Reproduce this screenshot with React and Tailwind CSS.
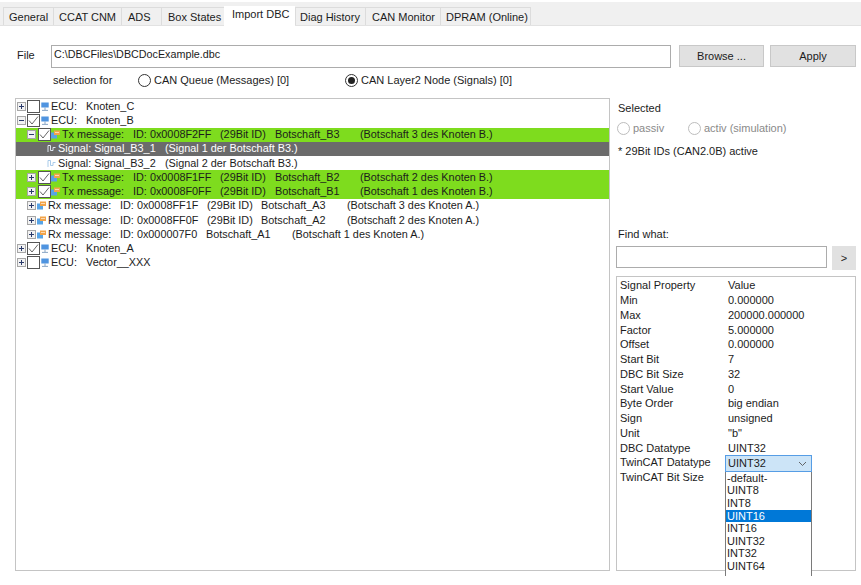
import React from "react";

const tabs = [
  ["General", "w-[51px] pl-[5px]"],
  ["CCAT CNM", "w-[69px] pl-[5px]"],
  ["ADS", "w-[41px] pl-[6px]"],
  ["Box States", "w-[64px] pl-[6px]"],
];
const tabs2 = [
  ["Diag History", "w-[71px] pl-[4px]"],
  ["CAN Monitor", "w-[76px] pl-[6px]"],
  ["DPRAM (Online)", "w-[91px] pl-[5px]"],
];

function Expander({ open }) {
  return (
    <span className="w-[9px] h-[9px] border border-[#a6a6a6] bg-[#f2f2f2] flex items-center justify-center shrink-0 relative">
      <span className="w-[5px] h-px bg-[#2a3a6a] block" />
      {!open && <span className="absolute w-px h-[5px] bg-[#2a3a6a] block" />}
    </span>
  );
}

function Check({ on }) {
  return (
    <span className="w-[13px] h-[13px] border border-[#555] bg-white shrink-0 flex items-center justify-center">
      {on && (
        <svg width="11" height="11" viewBox="0 0 11 11">
          <path d="M1 5.5 L4 9 L10 1.5" fill="none" stroke="#555" strokeWidth="0.9" />
        </svg>
      )}
    </span>
  );
}

function EcuIcon() {
  return (
    <svg width="8" height="9" viewBox="0 0 8 9" className="shrink-0">
      <rect x="0.3" y="0.5" width="7.4" height="5" fill="#4f94e0" />
      <path d="M4 5.5 V8 M1 8.4 H7" stroke="#7d9cc0" strokeWidth="0.9" />
    </svg>
  );
}

function MsgIcon() {
  return (
    <svg width="9" height="9" viewBox="0 0 9 9" className="shrink-0">
      <rect x="0" y="2.5" width="6" height="6" fill="#58a4e6" />
      <path d="M3 0.5 H9 V5 H3 Z" fill="#f2a44a" />
      <path d="M4 2.5 H8" stroke="#fff" strokeWidth="0.6" />
    </svg>
  );
}

function SigIcon({ light }) {
  const c = light ? "#dfe6f0" : "#a9cbea";
  return (
    <svg width="9" height="9" viewBox="0 0 9 9" className="shrink-0">
      <path d="M1 8 V1.5 H3.5 V6.5 H6 V3.5 H8.5" fill="none" stroke={c} strokeWidth="1" />
    </svg>
  );
}

function Row({ className = "", children }) {
  return <div className={`h-[14.25px] flex items-center whitespace-pre text-[10.85px] ${className}`}>{children}</div>;
}

function Ecu({ name, open, on }) {
  return (
    <Row className="pl-px">
      <Expander open={open} />
      <span className="w-px" />
      <Check on={on} />
      <span className="ml-px" />
      <EcuIcon />
      <span className="ml-[2px] w-[35px]">ECU:</span>
      <span>{name}</span>
    </Row>
  );
}

function Tx({ open, id, name, desc }) {
  return (
    <Row className="pl-[11px] bg-[#7edc1e]">
      <Expander open={open} />
      <span className="w-[2px]" />
      <Check on />
      <MsgIcon />
      <span className="ml-[2px] w-[71px]">Tx message:</span>
      <span className="w-[87px]">ID: {id}</span>
      <span className="w-[55px]">(29Bit ID)</span>
      <span className="w-[85px]">{name}</span>
      <span>{desc}</span>
    </Row>
  );
}

function Rx({ id, bits = true, name, desc }) {
  return (
    <Row className="pl-[11px]">
      <Expander />
      <span className="w-px" />
      <MsgIcon />
      <span className="ml-[2px] w-[72px]">Rx message:</span>
      <span className={bits ? "w-[87px]" : "w-[86px]"}>ID: {id}</span>
      {bits && <span className="w-[54px]">(29Bit ID)</span>}
      <span className="w-[86px]">{name}</span>
      <span>{desc}</span>
    </Row>
  );
}

const props = [
  ["Min", "0.000000"],
  ["Max", "200000.000000"],
  ["Factor", "5.000000"],
  ["Offset", "0.000000"],
  ["Start Bit", "7"],
  ["DBC Bit Size", "32"],
  ["Start Value", "0"],
  ["Byte Order", "big endian"],
  ["Sign", "unsigned"],
  ["Unit", '"b"'],
  ["DBC Datatype", "UINT32"],
];

const options = ["-default-", "UINT8", "INT8", "UINT16", "INT16", "UINT32", "INT32", "UINT64"];

function Radio({ on, disabled, label, className = "" }) {
  return (
    <span className={`flex items-center ${className}`}>
      <span
        className={`w-[13px] h-[13px] rounded-full border bg-white flex items-center justify-center shrink-0 ${
          disabled ? "border-[#bdbdbd]" : "border-[#333]"
        }`}
      >
        {on && <span className="w-[7px] h-[7px] rounded-full bg-[#222] block" />}
      </span>
      <span className={`ml-[3px] ${disabled ? "text-[#8a8a8a]" : ""}`}>{label}</span>
    </span>
  );
}

export default function App() {
  return (
    <div className="relative w-[861px] h-[585px] bg-white overflow-hidden text-[11px] leading-none text-[#1c1c1c] font-['Liberation_Sans',sans-serif]">
      <div className="h-[2px]" />
      <div className="h-[24px] bg-[#f0f0f0] flex items-end pl-[3px] border-b border-[#e2e2e2]">
        {tabs.map(([t, w]) => (
          <div key={t} className={`${w} h-[18px] pt-px flex items-center border border-b-0 border-[#dcdcdc] -mr-px`}>
            {t}
          </div>
        ))}
        <div className="w-[71px] h-[20px] bg-white flex items-center pl-[8px] pb-[3px] z-10 -mb-px">Import DBC</div>
        {tabs2.map(([t, w]) => (
          <div key={t} className={`${w} h-[18px] pt-px flex items-center border border-b-0 border-[#dcdcdc] -mr-px`}>
            {t}
          </div>
        ))}
      </div>

      <div className="h-[18px]" />
      <div className="flex items-center h-[24px]">
        <span className="ml-[17px] w-[34px] pb-[2px]">File</span>
        <div className="w-[620px] h-[23px] border border-[#acacac] pl-[2px] pt-[3px] text-[10.75px]">C:\DBCFiles\DBCDocExample.dbc</div>
        <button className="ml-[8px] w-[85px] h-[22px] bg-[#e1e1e1] border border-[#c8c8c8]">Browse ...</button>
        <button className="ml-[6px] w-[86px] h-[22px] bg-[#e1e1e1] border border-[#c8c8c8]">Apply</button>
      </div>

      <div className="flex items-center h-[24px] pl-[53px]">
        <span className="w-[85px]">selection for</span>
        <Radio label="CAN Queue (Messages) [0]" className="w-[207px]" />
        <Radio on label="CAN Layer2 Node (Signals) [0]" />
      </div>

      <div className="flex mt-[6px] pl-[15px]">
        <div className="w-[595px] h-[473px] border border-[#c4c4c4]">
          <Ecu name="Knoten_C" open={false} />
          <Ecu name="Knoten_B" open on />
          <Tx open id="0x0008F2FF" name="Botschaft_B3" desc="(Botschaft 3 des Knoten B.)" />
          <Row className="pl-[31px] bg-[#6b6b6b] text-white">
            <SigIcon light />
            <span className="ml-[2px] w-[107px]">Signal: Signal_B3_1</span>
            <span>(Signal 1 der Botschaft B3.)</span>
          </Row>
          <Row className="pl-[31px]">
            <SigIcon />
            <span className="ml-[2px] w-[107px]">Signal: Signal_B3_2</span>
            <span>(Signal 2 der Botschaft B3.)</span>
          </Row>
          <Tx id="0x0008F1FF" name="Botschaft_B2" desc="(Botschaft 2 des Knoten B.)" />
          <Tx id="0x0008F0FF" name="Botschaft_B1" desc="(Botschaft 1 des Knoten B.)" />
          <Rx id="0x0008FF1F" name="Botschaft_A3" desc="(Botschaft 3 des Knoten A.)" />
          <Rx id="0x0008FF0F" name="Botschaft_A2" desc="(Botschaft 2 des Knoten A.)" />
          <Rx id="0x000007F0" bits={false} name="Botschaft_A1" desc="(Botschaft 1 des Knoten A.)" />
          <Ecu name="Knoten_A" on />
          <Ecu name="Vector__XXX" />
        </div>

        <div className="ml-[6px] w-[240px]">
          <div className="pl-[2px] pt-[5px]">Selected</div>
          <div className="flex items-center mt-[7px] pl-px h-[14px]">
            <Radio disabled label="passiv" className="w-[71px]" />
            <Radio disabled label="activ (simulation)" />
          </div>
          <div className="pl-[2px] mt-[11px]">* 29Bit IDs (CAN2.0B) active</div>

          <div className="pl-[2px] mt-[72px]">Find what:</div>
          <div className="flex mt-[6px]">
            <div className="w-[211px] h-[22px] border border-[#acacac]" />
            <button className="ml-[5px] w-[24px] h-[24px] bg-[#e1e1e1]">&gt;</button>
          </div>
          <div className="mt-[6px] w-[240px] h-[295px] border border-[#c4c4c4] pt-[1.5px] pl-[3px]">
            <div className="flex h-[14.75px] items-center">
              <span className="w-[106px]">Signal Property</span>
              <span className="pl-[2px]">Value</span>
            </div>
            {props.map(([k, v]) => (
              <div key={k} className="flex h-[14.75px] items-center">
                <span className="w-[106px]">{k}</span>
                <span className="pl-[2px]">{v}</span>
              </div>
            ))}
            <div className="flex h-[14.75px] items-center">TwinCAT Datatype</div>
            <div className="flex h-[14.75px] items-center">TwinCAT Bit Size</div>
          </div>
        </div>
      </div>

      <div className="absolute left-[725px] top-[455px] w-[87px] h-[17px] bg-[#cce4f7] border border-[#569de5] flex items-center pl-[2px]">
        UINT32
        <svg width="9" height="6" viewBox="0 0 9 6" className="absolute right-[4px] top-[5px]">
          <path d="M1 1 L4.5 4.5 L8 1" fill="none" stroke="#555" strokeWidth="0.9" />
        </svg>
      </div>
      <div className="absolute left-[725px] top-[472px] w-[87px] h-[104px] bg-white border-x border-[#7a7a7a]">
        {options.map((o) => (
          <div key={o} className={`h-[12.6px] flex items-center pl-px ${o === "UINT16" ? "bg-[#0078d7] text-white" : ""}`}>
            {o}
          </div>
        ))}
      </div>
    </div>
  );
}
